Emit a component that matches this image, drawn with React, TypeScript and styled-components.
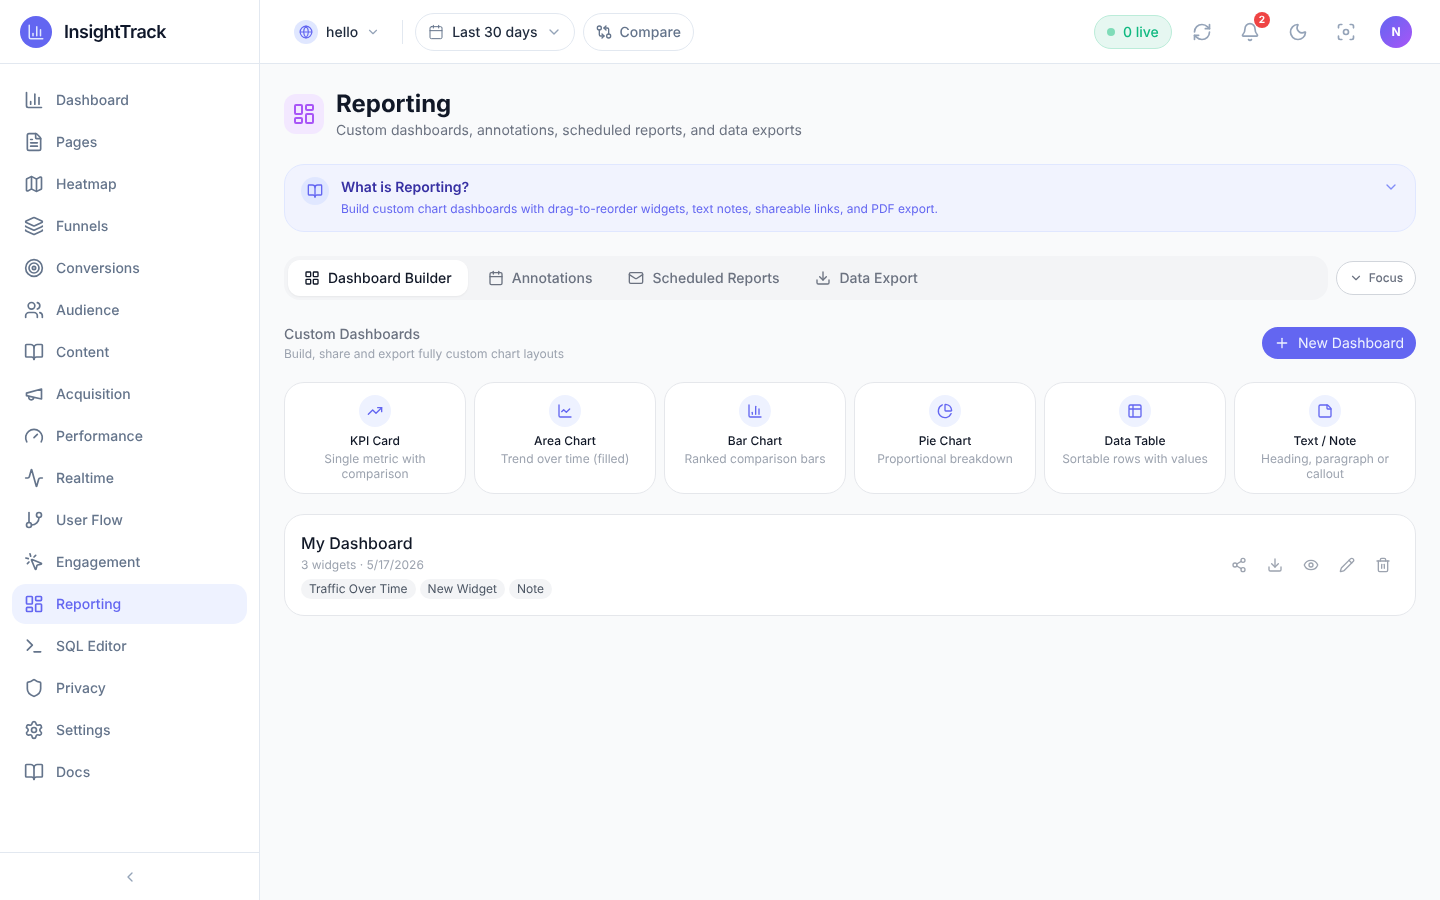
import styled, { createGlobalStyle } from "styled-components";
import {
  Activity,
  Bell,
  BookOpen,
  Calendar,
  ChartColumn,
  ChartLine,
  ChartPie,
  ChevronDown,
  ChevronLeft,
  Download,
  Eye,
  FileText,
  Focus,
  Gauge,
  GitBranch,
  GitCompareArrows,
  Globe,
  Layers,
  LayoutDashboard,
  LayoutGrid,
  Mail,
  Map,
  Moon,
  MousePointerClick,
  Pencil,
  Plus,
  RefreshCw,
  Settings,
  Share2,
  Shield,
  StickyNote,
  Table2,
  Target,
  Terminal,
  Trash2,
  TrendingUp,
  Users,
} from "lucide-react";

const GlobalStyle = createGlobalStyle`
  * { box-sizing: border-box; }
  html, body { margin: 0; height: 100%; }
  body {
    font-family: Inter, "Liberation Sans", sans-serif;
    line-height: 1.5;
    text-rendering: geometricPrecision;
    -webkit-font-smoothing: antialiased;
    background: #f9fafb;
    color: #111827;
    overflow: hidden;
  }
  button { font-family: inherit; line-height: 1.5; text-rendering: geometricPrecision; }
`;

const Shell = styled.div`
  display: flex;
  width: 1440px;
  height: 900px;
  will-change: transform;
`;

const Sidebar = styled.aside`
  width: 260px;
  flex-shrink: 0;
  display: flex;
  flex-direction: column;
  background: #ffffff;
  border-right: 1px solid #e2e8f0;
`;

const Brand = styled.div`
  height: 64px;
  flex-shrink: 0;
  display: flex;
  align-items: center;
  gap: 12px;
  padding: 1px 20px 0;
  border-bottom: 1px solid #e2e8f0;
`;

const BrandLogo = styled.div`
  width: 32px;
  height: 32px;
  border-radius: 50%;
  background: #6366f1;
  color: #e0e7ff;
  display: flex;
  align-items: center;
  justify-content: center;
`;

const BrandName = styled.span`
  font-size: 18px;
  font-weight: 600;
  letter-spacing: -0.45px;
  color: #0f172a;
`;

const Nav = styled.nav`
  flex: 1;
  display: flex;
  flex-direction: column;
  gap: 2px;
  padding: 16px 12px;
`;

const NavItem = styled.a<{ $active?: boolean }>`
  height: 40px;
  display: flex;
  align-items: center;
  gap: 12px;
  padding: 0 12px;
  border-radius: 14px;
  font-size: 14px;
  font-weight: 500;
  color: ${(props) => (props.$active ? "#6366f1" : "#64748b")};
  background: ${(props) => (props.$active ? "#eef2ff" : "transparent")};
`;

const SidebarFoot = styled.div`
  height: 48px;
  flex-shrink: 0;
  display: flex;
  align-items: center;
  justify-content: center;
  border-top: 1px solid #e2e8f0;
  color: #94a3b8;
`;

const Column = styled.div`
  flex: 1;
  min-width: 0;
  display: flex;
  flex-direction: column;
`;

const TopBar = styled.header`
  height: 64px;
  flex-shrink: 0;
  display: flex;
  align-items: center;
  padding: 1px 28px 0 34px;
  background: #ffffff;
  border-bottom: 1px solid #e2e8f0;
`;

const SiteSelect = styled.div`
  display: flex;
  align-items: center;
  gap: 8px;
  font-size: 14px;
  font-weight: 500;
  color: #1e293b;
  svg.caret { color: #94a3b8; }
`;

const SiteIcon = styled.span`
  width: 24px;
  height: 24px;
  border-radius: 50%;
  background: #e0e7ff;
  color: #6366f1;
  display: flex;
  align-items: center;
  justify-content: center;
`;

const Divider = styled.span`
  width: 1px;
  height: 24px;
  margin: 0 12px 0 22px;
  background: #e2e8f0;
`;

const PillButton = styled.button<{ $muted?: boolean }>`
  height: 38px;
  display: flex;
  align-items: center;
  gap: 8px;
  padding: 0 12px;
  margin-right: 8px;
  border: 1px solid #e2e8f0;
  border-radius: 19px;
  background: #ffffff;
  font-size: 14px;
  font-weight: 500;
  color: ${(props) => (props.$muted ? "#64748b" : "#1e293b")};
  svg { color: #94a3b8; }
  svg.lead { color: #64748b; }
`;

const Spacer = styled.div`
  flex: 1;
`;

const LivePill = styled.div`
  width: 78px;
  height: 34px;
  display: flex;
  align-items: center;
  gap: 8px;
  padding-left: 12px;
  margin-right: 6px;
  border: 1px solid #bbecd9;
  border-radius: 17px;
  background: #e6f7f1;
  font-size: 14px;
  font-weight: 500;
  color: #10b981;
`;

const LiveDot = styled.span`
  width: 8px;
  height: 8px;
  border-radius: 50%;
  background: #7fdcb8;
`;

const IconButton = styled.button`
  position: relative;
  width: 48px;
  height: 36px;
  padding: 0;
  border: 0;
  background: none;
  color: #94a3b8;
  display: flex;
  align-items: center;
  justify-content: center;
`;

const Badge = styled.span`
  position: absolute;
  top: -2px;
  right: 4px;
  width: 16px;
  height: 16px;
  border-radius: 50%;
  background: #ef4444;
  color: #ffffff;
  font-size: 10px;
  font-weight: 700;
  display: flex;
  align-items: center;
  justify-content: center;
`;

const Avatar = styled.div`
  width: 32px;
  height: 32px;
  margin-left: 10px;
  border-radius: 50%;
  background: linear-gradient(135deg, #6366f1, #a855f7);
  color: #ffffff;
  font-size: 12px;
  font-weight: 700;
  line-height: 20px;
  display: flex;
  align-items: center;
  justify-content: center;
`;

const Main = styled.main`
  flex: 1;
  padding: 24px;
`;

const PageHead = styled.div`
  height: 52px;
  display: flex;
  align-items: flex-start;
  gap: 12px;
  margin-bottom: 24px;
`;

const PageIcon = styled.div`
  width: 40px;
  height: 40px;
  margin-top: 6px;
  border-radius: 12px;
  background: #f3e8ff;
  color: #a855f7;
  display: flex;
  align-items: center;
  justify-content: center;
`;

const PageTitle = styled.h1`
  margin: 0;
  font-size: 24px;
  line-height: 32px;
  font-weight: 700;
  color: #111827;
`;

const PageSub = styled.p`
  margin: 0;
  font-size: 14px;
  color: #6b7280;
`;

const InfoBanner = styled.section`
  height: 68px;
  display: flex;
  gap: 12px;
  padding: 12px 16px;
  margin-bottom: 24px;
  border: 1px solid #e0e7ff;
  border-radius: 20px;
  background: #f1f3fe;
`;

const InfoIcon = styled.span`
  width: 28px;
  height: 28px;
  flex-shrink: 0;
  border-radius: 50%;
  background: #e0e7ff;
  color: #6366f1;
  display: flex;
  align-items: center;
  justify-content: center;
`;

const InfoBody = styled.div`
  flex: 1;
`;

const InfoTitle = styled.div`
  font-size: 14px;
  font-weight: 600;
  color: #3730a3;
`;

const InfoText = styled.div`
  margin-top: 3px;
  font-size: 12px;
  line-height: 16px;
  color: #6366f1;
`;

const InfoCaret = styled.span`
  display: flex;
  padding-top: 2px;
  height: 20px;
  color: #818cf8;
`;

const TabRow = styled.div`
  display: flex;
  align-items: center;
  gap: 8px;
  margin-bottom: 24px;
`;

const TabBar = styled.div`
  flex: 1;
  height: 44px;
  display: flex;
  align-items: center;
  gap: 4px;
  padding: 4px;
  border-radius: 16px;
  background: #f3f4f6;
`;

const Tab = styled.button<{ $active?: boolean }>`
  height: 36px;
  display: flex;
  align-items: center;
  gap: 8px;
  padding: 0 16px;
  border: 0;
  border-radius: 12px;
  font-size: 14px;
  font-weight: 500;
  color: ${(props) => (props.$active ? "#111827" : "#6b7280")};
  background: ${(props) => (props.$active ? "#ffffff" : "transparent")};
  box-shadow: ${(props) => (props.$active ? "0 1px 2px rgba(0,0,0,0.05)" : "none")};
`;

const FocusButton = styled.button`
  width: 80px;
  height: 34px;
  display: flex;
  align-items: center;
  justify-content: center;
  gap: 6px;
  border: 1px solid #d1d5db;
  border-radius: 17px;
  background: #ffffff;
  font-size: 12px;
  font-weight: 500;
  line-height: 20px;
  color: #6b7280;
`;

const SectionHead = styled.div`
  height: 38px;
  display: flex;
  align-items: center;
  justify-content: space-between;
  margin-bottom: 20px;
`;

const SectionTitle = styled.div`
  font-size: 14px;
  font-weight: 500;
  color: #6b7280;
`;

const SectionSub = styled.div`
  margin-top: 1px;
  font-size: 12px;
  line-height: 16px;
  color: #9ca3af;
`;

const PrimaryButton = styled.button`
  width: 154px;
  height: 32px;
  display: flex;
  align-items: center;
  gap: 8px;
  padding: 0 0 0 12px;
  border: 0;
  border-radius: 16px;
  background: #6366f1;
  color: #eef2ff;
  font-size: 14px;
  font-weight: 400;
  white-space: nowrap;
`;

const WidgetGrid = styled.div`
  display: grid;
  grid-template-columns: repeat(6, 1fr);
  gap: 8px;
  margin-bottom: 20px;
`;

const WidgetCard = styled.div`
  height: 112px;
  padding: 12px;
  display: flex;
  flex-direction: column;
  align-items: center;
  border: 1px solid #e5e7eb;
  border-radius: 20px;
  background: #ffffff;
  text-align: center;
`;

const WidgetIcon = styled.span`
  width: 32px;
  height: 32px;
  flex-shrink: 0;
  border-radius: 50%;
  background: #eef2ff;
  color: #6366f1;
  display: flex;
  align-items: center;
  justify-content: center;
`;

const WidgetName = styled.div`
  margin-top: 6px;
  font-size: 12px;
  line-height: 16px;
  font-weight: 500;
  color: #111827;
`;

const WidgetDesc = styled.div`
  margin-top: 2px;
  font-size: 12px;
  line-height: 15px;
  color: #9ca3af;
`;

const DashCard = styled.div`
  height: 102px;
  display: flex;
  align-items: center;
  justify-content: space-between;
  padding: 0 16px;
  border: 1px solid #e5e7eb;
  border-radius: 20px;
  background: #ffffff;
`;

const DashName = styled.div`
  font-size: 16px;
  line-height: 24px;
  font-weight: 500;
  color: #111827;
`;

const DashMeta = styled.div`
  margin-top: 2px;
  font-size: 12px;
  line-height: 16px;
  color: #9ca3af;
`;

const ChipRow = styled.div`
  display: flex;
  gap: 4px;
  margin-top: 6px;
`;

const Chip = styled.span`
  height: 20px;
  display: flex;
  align-items: center;
  padding: 0 8px;
  border-radius: 10px;
  background: #f3f4f6;
  font-size: 12px;
  line-height: 20px;
  color: #4b5563;
`;

const ActionRow = styled.div`
  display: flex;
  gap: 4px;
  color: #9ca3af;
`;

const ActionButton = styled.button`
  width: 32px;
  height: 32px;
  padding: 0;
  border: 0;
  background: none;
  color: inherit;
  display: flex;
  align-items: center;
  justify-content: center;
`;

// lucide's current megaphone has another shape than the one in the design
function MegaphoneIcon({ size = 20 }: { size?: number }) {
  return (
    <svg
      width={size}
      height={size}
      viewBox="0 0 24 24"
      fill="none"
      stroke="currentColor"
      strokeWidth={2}
      strokeLinecap="round"
      strokeLinejoin="round"
    >
      <path d="m3 11 18-5v12L3 14v-3z" />
      <path d="M11.6 16.8a3 3 0 1 1-5.8-1.6" />
    </svg>
  );
}

const navItems = [
  { label: "Dashboard", icon: ChartColumn },
  { label: "Pages", icon: FileText },
  { label: "Heatmap", icon: Map },
  { label: "Funnels", icon: Layers },
  { label: "Conversions", icon: Target },
  { label: "Audience", icon: Users },
  { label: "Content", icon: BookOpen },
  { label: "Acquisition", icon: MegaphoneIcon },
  { label: "Performance", icon: Gauge },
  { label: "Realtime", icon: Activity },
  { label: "User Flow", icon: GitBranch },
  { label: "Engagement", icon: MousePointerClick },
  { label: "Reporting", icon: LayoutDashboard, active: true },
  { label: "SQL Editor", icon: Terminal },
  { label: "Privacy", icon: Shield },
  { label: "Settings", icon: Settings },
  { label: "Docs", icon: BookOpen },
];

const tabs = [
  { label: "Dashboard Builder", icon: LayoutGrid, active: true },
  { label: "Annotations", icon: Calendar },
  { label: "Scheduled Reports", icon: Mail },
  { label: "Data Export", icon: Download },
];

const widgets = [
  { name: "KPI Card", desc: "Single metric with comparison", icon: TrendingUp },
  { name: "Area Chart", desc: "Trend over time (filled)", icon: ChartLine },
  { name: "Bar Chart", desc: "Ranked comparison bars", icon: ChartColumn },
  { name: "Pie Chart", desc: "Proportional breakdown", icon: ChartPie },
  { name: "Data Table", desc: "Sortable rows with values", icon: Table2 },
  { name: "Text / Note", desc: "Heading, paragraph or callout", icon: StickyNote },
];

const actions = [Share2, Download, Eye, Pencil, Trash2];

function App() {
  return (
    <Shell>
      <GlobalStyle />
      <Sidebar>
        <Brand>
          <BrandLogo>
            <ChartColumn size={18} />
          </BrandLogo>
          <BrandName>InsightTrack</BrandName>
        </Brand>
        <Nav>
          {navItems.map((item) => (
            <NavItem key={item.label} $active={item.active}>
              <item.icon size={20} />
              {item.label}
            </NavItem>
          ))}
        </Nav>
        <SidebarFoot>
          <ChevronLeft size={16} />
        </SidebarFoot>
      </Sidebar>
      <Column>
        <TopBar>
          <SiteSelect>
            <SiteIcon>
              <Globe size={14} />
            </SiteIcon>
            hello
            <ChevronDown className="caret" size={14} />
          </SiteSelect>
          <Divider />
          <PillButton>
            <Calendar className="lead" size={16} strokeWidth={1.5} />
            Last 30 days
            <ChevronDown size={16} />
          </PillButton>
          <PillButton $muted>
            <GitCompareArrows className="lead" size={16} />
            Compare
          </PillButton>
          <Spacer />
          <LivePill>
            <LiveDot />0 live
          </LivePill>
          <IconButton>
            <RefreshCw size={20} />
          </IconButton>
          <IconButton>
            <Bell size={20} />
            <Badge>2</Badge>
          </IconButton>
          <IconButton>
            <Moon size={20} />
          </IconButton>
          <IconButton>
            <Focus size={20} />
          </IconButton>
          <Avatar>N</Avatar>
        </TopBar>
        <Main>
          <PageHead>
            <PageIcon>
              <LayoutDashboard size={24} />
            </PageIcon>
            <div>
              <PageTitle>Reporting</PageTitle>
              <PageSub>Custom dashboards, annotations, scheduled reports, and data exports</PageSub>
            </div>
          </PageHead>
          <InfoBanner>
            <InfoIcon>
              <BookOpen size={16} />
            </InfoIcon>
            <InfoBody>
              <InfoTitle>What is Reporting?</InfoTitle>
              <InfoText>
                Build custom chart dashboards with drag-to-reorder widgets, text notes, shareable links, and PDF export.
              </InfoText>
            </InfoBody>
            <InfoCaret>
              <ChevronDown size={16} />
            </InfoCaret>
          </InfoBanner>
          <TabRow>
            <TabBar>
              {tabs.map((tab) => (
                <Tab key={tab.label} $active={tab.active}>
                  <tab.icon size={16} />
                  {tab.label}
                </Tab>
              ))}
            </TabBar>
            <FocusButton>
              <ChevronDown size={14} />
              Focus
            </FocusButton>
          </TabRow>
          <SectionHead>
            <div>
              <SectionTitle>Custom Dashboards</SectionTitle>
              <SectionSub>Build, share and export fully custom chart layouts</SectionSub>
            </div>
            <PrimaryButton>
              <Plus size={16} />
              New Dashboard
            </PrimaryButton>
          </SectionHead>
          <WidgetGrid>
            {widgets.map((widget) => (
              <WidgetCard key={widget.name}>
                <WidgetIcon>
                  <widget.icon size={16} />
                </WidgetIcon>
                <WidgetName>{widget.name}</WidgetName>
                <WidgetDesc>{widget.desc}</WidgetDesc>
              </WidgetCard>
            ))}
          </WidgetGrid>
          <DashCard>
            <div>
              <DashName>My Dashboard</DashName>
              <DashMeta>3 widgets · 5/17/2026</DashMeta>
              <ChipRow>
                <Chip>Traffic Over Time</Chip>
                <Chip>New Widget</Chip>
                <Chip>Note</Chip>
              </ChipRow>
            </div>
            <ActionRow>
              {actions.map((Action, i) => (
                <ActionButton key={i}>
                  <Action size={16} />
                </ActionButton>
              ))}
            </ActionRow>
          </DashCard>
        </Main>
      </Column>
    </Shell>
  );
}

export default App;
